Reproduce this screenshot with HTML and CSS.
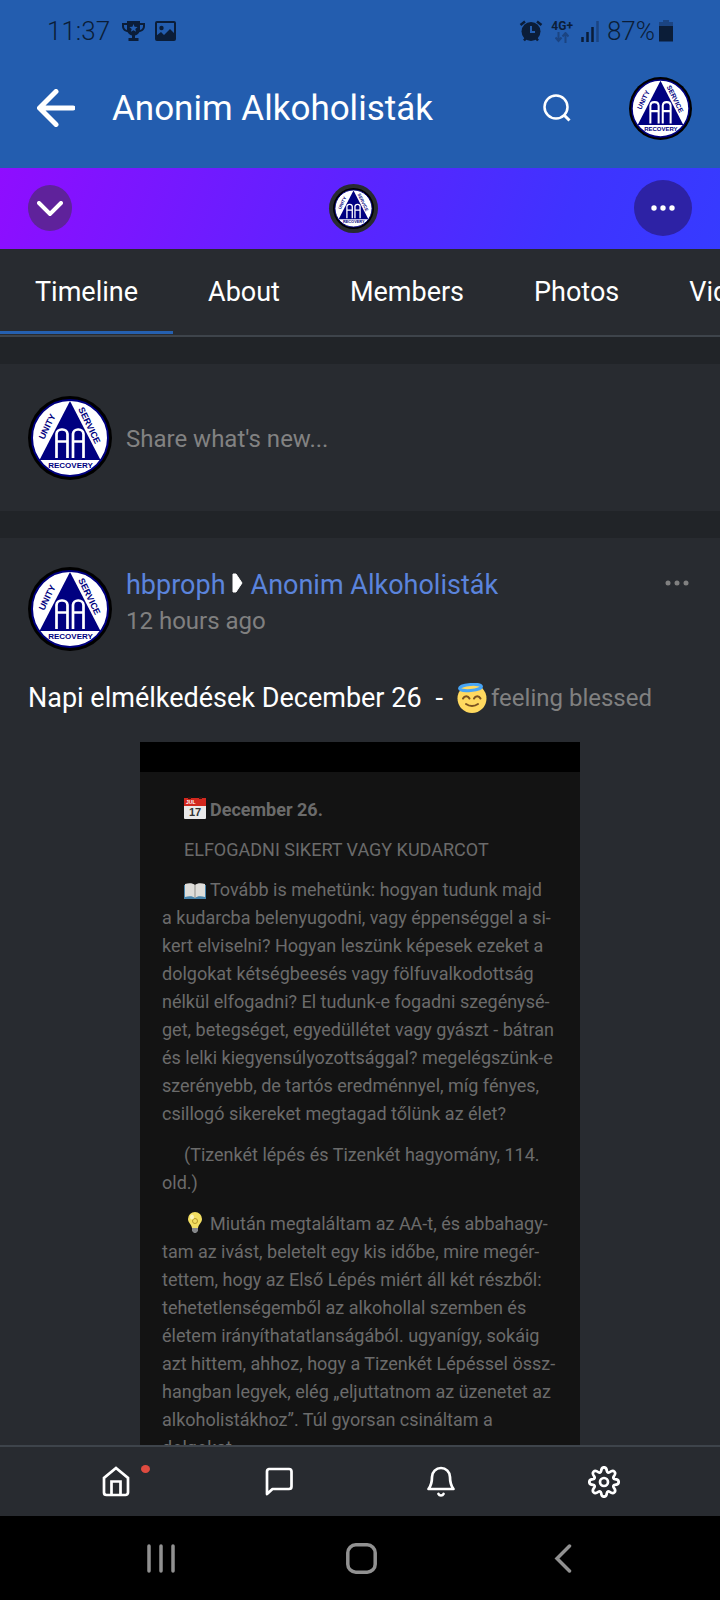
FILE: index.html
```html
<!DOCTYPE html>
<html lang="hu">
<head>
<meta charset="utf-8">
<meta name="viewport" content="width=device-width, initial-scale=1">
<title>Anonim Alkoholisták</title>
<link rel="stylesheet" href="styles.css">
</head>
<body>
<svg class="defs" aria-hidden="true">
  <symbol id="aa-logo" viewBox="0 0 84 84">
    <circle cx="42" cy="42" r="42" fill="#000"/>
    <circle cx="42" cy="42" r="38" fill="#fff" stroke="#000080" stroke-width="2"/>
    <path d="M42 5 72.500 64h-61z" fill="#000080"/>
    <path d="M28.500 62V38a5 5 0 0 1 5-4.500h1a5 5 0 0 1 5 4.500v24M28.500 45.500h11M45 62V38a5 5 0 0 1 5-4.500h.5a5 5 0 0 1 5 4.500v24M45 45.500h10.500" fill="none" stroke="#fff" stroke-width="2.700"/>
    <g class="logo-words">
      <text transform="translate(16 44) rotate(-64)">UNITY</text>
      <text transform="translate(50 13) rotate(64)">SERVICE</text>
      <text x="42.500" y="71.500" text-anchor="middle">RECOVERY</text>
    </g>
  </symbol>
</svg>

<header class="top">
  <div class="status">
    <span>11:37</span>
    <svg class="trophy" width="23" height="20" viewBox="0 0 23 20"><path fill="currentColor" fill-rule="evenodd" d="M5 0h13v2h5v3c0 3-2 5.500-5.500 6-1 2-2.500 3-4.500 3.500V17h3.500v3h-10v-3H10v-2.500C8 14 6.500 13 5.500 11 2 10.500 0 8 0 5V2h5zM2 4v1c0 2 1 3.400 3 4V4zm19 0h-3v5c2-.6 3-2 3-4zm-9.500-1L10.400 5.800l-3 .2 2.300 1.900-.8 2.900 2.600-1.600 2.500 1.600-.7-2.900L15.600 6l-3-.2z"/></svg>
    <svg class="picture" width="21" height="20" viewBox="0 0 21 20"><rect x="1" y="1" width="19" height="18" rx="1" fill="none" stroke="currentColor" stroke-width="2"/><circle cx="6.500" cy="7" r="2.200" fill="currentColor"/><path d="M1 15l5-4 3 3 6-6 5 5v6H1z" fill="currentColor"/></svg>
    <div class="status-right">
      <svg width="24" height="22" viewBox="0 0 24 22"><path d="M1.500 5 6 1.500M18 1.500 22.500 5M5 20.500l2.500-3M19 20.500l-2.500-3" stroke="currentColor" stroke-width="2.500"/><circle cx="12" cy="11.500" r="9.500" fill="currentColor"/><path d="M12 6v6h4" fill="none" stroke="#235daf" stroke-width="2"/></svg>
      <div class="network"><span>4G+</span><svg width="14" height="11" viewBox="0 0 14 11"><path d="M3.500 0v8M.5 5.500l3 3.500 3-3.500M10.500 11V2M7.500 4.500l3-3.500 3 3.500" fill="none" stroke="#1b4482" stroke-width="2"/></svg></div>
      <svg width="18" height="21" viewBox="0 0 18 21"><path d="M1.500 16v5M6.500 11v10M11.500 6v15" stroke="currentColor" stroke-width="2.500"/><path d="M16.500 0v21" stroke="#1b4482" stroke-width="2.500"/></svg>
      <span class="charge">87%</span>
      <svg width="14" height="22" viewBox="0 0 14 22"><path d="M0 2h4V0h6v2h4v4H0z" fill="#1b4482"/><path d="M0 6h14v15.500H0z" fill="currentColor"/></svg>
    </div>
  </div>
  <div class="appbar">
    <button class="plain" aria-label="Back"><svg width="38" height="38" viewBox="0 0 38 38"><path d="M19 2.500 2.500 19 19 35.500M3 19h33" fill="none" stroke="#fff" stroke-width="5" stroke-linecap="round" stroke-linejoin="round"/></svg></button>
    <h1>Anonim Alkoholisták</h1>
    <button class="plain search" aria-label="Search"><svg width="28" height="28" viewBox="0 0 28 28"><circle cx="13" cy="13" r="11.500" fill="none" stroke="#fff" stroke-width="2.500"/><path d="m21 21 5.500 5.500" stroke="#fff" stroke-width="3"/></svg></button>
    <button class="plain" aria-label="Profile"><svg width="63" height="63"><use href="#aa-logo"/></svg></button>
  </div>
</header>

<div class="cover">
  <button class="round fold" aria-label="Collapse"><svg width="26" height="15" viewBox="0 0 26 15"><path d="m2 2 11 11L24 2" fill="none" stroke="#fff" stroke-width="4" stroke-linecap="round"/></svg></button>
  <div class="group-logo"><svg width="41" height="41"><use href="#aa-logo"/></svg></div>
  <button class="round more" aria-label="More"><svg width="24" height="6" viewBox="0 0 24 6" fill="#fff"><circle cx="3" cy="3" r="2.700"/><circle cx="12" cy="3" r="2.700"/><circle cx="21" cy="3" r="2.700"/></svg></button>
</div>

<nav class="tabs">
  <a href="#timeline" class="active">Timeline</a>
  <a href="#about">About</a>
  <a href="#members">Members</a>
  <a href="#photos">Photos</a>
  <a href="#videos">Videos</a>
</nav>

<main class="feed">
  <section class="panel composer">
    <svg class="avatar"><use href="#aa-logo"/></svg>
    <input type="text" aria-label="Share what's new" placeholder="Share what's new...">
  </section>

  <article class="panel post">
    <div class="post-head">
      <svg class="avatar"><use href="#aa-logo"/></svg>
      <div class="byline">
        <div class="names"><a href="#user">hbproph</a><svg width="11" height="20" viewBox="0 0 11 20"><path d="M1 1h3l6 9-6 9H1z" fill="#fff" stroke="#fff" stroke-linejoin="round"/></svg><a href="#group">Anonim Alkoholisták</a></div>
        <div class="time">12 hours ago</div>
      </div>
      <button class="plain post-more" aria-label="Post options"><svg width="24" height="6" viewBox="0 0 24 6" fill="#808080"><circle cx="3" cy="3" r="2.500"/><circle cx="12" cy="3" r="2.500"/><circle cx="21" cy="3" r="2.500"/></svg></button>
    </div>
    <p class="message">
      <span>Napi elmélkedések December 26</span>
      <span class="dash">-</span>
      <svg width="30" height="30" viewBox="0 0 30 30"><circle cx="15" cy="15.500" r="14.500" fill="#ffd95f"/><ellipse cx="13.500" cy="4.500" rx="11" ry="3" transform="rotate(-5 13.500 4.500)" fill="#ffd95f" stroke="#48a5f5" stroke-width="3"/><path d="M6 15.500c1.500-3 5-3 6.500 0M17 15.500c1.500-3 5-3 6.500 0M9 21c3.500 2.500 8.500 2.500 12 0" fill="none" stroke="#7b5321" stroke-width="2" stroke-linecap="round"/></svg>
      <span class="feeling">feeling blessed</span>
    </p>
    <div class="sheet">
      <div class="reading">
        <p class="heading"><svg class="glyph" width="22" height="22" viewBox="0 0 22 22"><rect y="1" width="22" height="21" rx="1" fill="#e9e9e9"/><path d="M0 1h22v8H0z" fill="#d2281e"/><path d="M4 0h3v2H4zM15 0h3v2h-3z" fill="#3a1512"/><text class="cal-month" x="2" y="7">JUL</text><text class="cal-day" x="11" y="19" text-anchor="middle">17</text></svg><strong>December 26.</strong></p>
        <p class="heading">ELFOGADNI SIKERT VAGY KUDARCOT</p>
        <p><svg class="glyph" width="22" height="16" viewBox="0 0 22 16"><path d="M0 2h22v14H0z" fill="#4582aa"/><path d="M1 1c4-1.500 8-1 10 1 2-2 6-2.500 10-1v13c-4-1-8-1-10 1-2-2-6-2-10-1z" fill="#deddd9"/><path d="M11 2v13" stroke="#8d8d89"/></svg>Tovább is mehetünk: hogyan tudunk majd<br>a kudarcba belenyugodni, vagy éppenséggel a si-<br>kert elviselni? Hogyan leszünk képesek ezeket a<br>dolgokat kétségbeesés vagy fölfuvalkodottság<br>nélkül elfogadni? El tudunk-e fogadni szegénysé-<br>get, betegséget, egyedüllétet vagy gyászt - bátran<br>és lelki kiegyensúlyozottsággal? megelégszünk-e<br>szerényebb, de tartós eredménnyel, míg fényes,<br>csillogó sikereket megtagad tőlünk az élet?</p>
        <p>(Tizenkét lépés és Tizenkét hagyomány, 114.<br>old.)</p>
        <p><svg class="glyph" width="22" height="21" viewBox="0 0 22 21"><path d="M8 14h6v5l-2 2h-2l-2-2z" fill="#85878a"/><path d="M11 0a7 7 0 0 1 7 7c0 4-3.500 5-4 9H8c-.5-4-4-5-4-9a7 7 0 0 1 7-7z" fill="#f3df62"/><circle cx="11" cy="9" r="2.500" fill="none" stroke="#b79a2c"/><ellipse cx="8" cy="5" rx="2" ry="2.500" fill="#fcf5ba"/></svg>Miután megtaláltam az AA-t, és abbahagy-<br>tam az ivást, beletelt egy kis időbe, mire megér-<br>tettem, hogy az Első Lépés miért áll két részből:<br>tehetetlenségemből az alkohollal szemben és<br>életem irányíthatatlanságából. ugyanígy, sokáig<br>azt hittem, ahhoz, hogy a Tizenkét Lépéssel össz-<br>hangban legyek, elég „eljuttatnom az üzenetet az<br>alkoholistákhoz”. Túl gyorsan csináltam a<br>dolgokat.</p>
      </div>
    </div>
  </article>
</main>

<nav class="dock">
  <a href="#home" aria-label="Home"><svg width="28" height="31" viewBox="0 0 28 31"><path d="M14 2 26 12v14.500a2.500 2.500 0 0 1-2.500 2.500h-19A2.500 2.500 0 0 1 2 26.500V12zM9.500 29V15.500h9V29" fill="none" stroke="#fff" stroke-width="2.700"/></svg><i class="dot"></i></a>
  <a href="#messages" aria-label="Messages"><svg width="28" height="31" viewBox="0 0 28 31"><path d="M4 3h20a2.500 2.500 0 0 1 2.500 2.500v15A2.500 2.500 0 0 1 24 23H7.500L2 28V5.500A2.500 2.500 0 0 1 4 3z" fill="none" stroke="#fff" stroke-width="2.700" stroke-linejoin="round"/></svg></a>
  <a href="#alerts" aria-label="Notifications"><svg width="28" height="31" viewBox="0 0 28 31"><path d="M1.500 23h25c-2-2.500-3.500-5.500-3.500-12a9 9 0 0 0-18 0c0 6.500-1.500 9.500-3.500 12zM11.500 28c1 2 4 2 5 0" fill="none" stroke="#fff" stroke-width="2.700" stroke-linecap="round" stroke-linejoin="round"/></svg></a>
  <a href="#settings" aria-label="Settings"><svg width="32" height="32" viewBox="0 0 32 32" fill="none" stroke="#fff" stroke-width="2.700"><circle cx="16" cy="16" r="4"/><path stroke-linejoin="round" d="M13.100 5.100C13.300 2.700 14.300 1.300 16 1.300s2.700 1.400 2.900 3.800c.2 1.500 1.500 2 2.700 1.100 1.900-1.500 3.600-1.800 4.800-.6s.9 2.900-.6 4.800c-.9 1.200-.4 2.500 1.100 2.700 2.400.2 3.800 1.200 3.800 2.900s-1.400 2.700-3.800 2.900c-1.500.2-2 1.500-1.100 2.700 1.500 1.900 1.800 3.600.6 4.800s-2.900.9-4.800-.6c-1.200-.9-2.500-.4-2.700 1.100-.2 2.400-1.200 3.800-2.900 3.800s-2.700-1.400-2.900-3.800c-.2-1.500-1.500-2-2.700-1.100-1.900 1.500-3.600 1.800-4.800.6s-.9-2.900.6-4.800c.9-1.200.4-2.500-1.100-2.700-2.400-.2-3.800-1.200-3.800-2.900s1.400-2.700 3.800-2.900c1.500-.2 2-1.500 1.100-2.700-1.500-1.900-1.800-3.600-.6-4.800s2.900-.9 4.800.6c1.200.9 2.500.4 2.700-1.100z"/></svg></a>
</nav>

<footer class="system">
  <button class="plain" aria-label="Recent apps"><svg width="28" height="29" viewBox="0 0 28 29"><path d="M2 2v25M14 2v25M26 2v25" stroke="#919191" stroke-width="3.500" stroke-linecap="round"/></svg></button>
  <button class="plain" aria-label="Home screen"><svg width="31" height="31" viewBox="0 0 31 31"><rect x="1.800" y="1.800" width="27.400" height="27.400" rx="8" fill="none" stroke="#919191" stroke-width="3.500"/></svg></button>
  <button class="plain" aria-label="System back"><svg width="18" height="29" viewBox="0 0 18 29"><path d="M15.500 2 3 14.500 15.500 27" fill="none" stroke="#919191" stroke-width="3.500" stroke-linecap="round"/></svg></button>
</footer>
</body>
</html>
```
FILE: styles.css
```css
* { box-sizing: border-box; }

body {
  margin: 0;
  height: 100vh;
  display: flex;
  flex-direction: column;
  background: #212428;
  color: #fff;
  font-family: Roboto, "Noto Sans", sans-serif;
  font-size: 27px;
  overflow: hidden;
}

svg { display: block; flex: none; }
a { color: inherit; text-decoration: none; }
p, h1 { margin: 0; font-weight: 400; }

.defs { display: none; }
.logo-words { font: bold 9px "Liberation Sans", Arial, sans-serif; fill: #000080; }
.logo-words text:last-child { font-size: 8px; }

.plain { padding: 0; border: 0; background: none; display: flex; justify-content: center; align-items: center; }

/* Top bars */
.top { background: #235daf; }
.status {
  display: flex;
  align-items: center;
  padding: 12px 47px 0;
  line-height: 38px;
  font-size: 26px;
  font-weight: 300;
  color: #0b1d38;
}
.trophy { margin-left: 12px; }
.picture { margin-left: 10px; }
.status-right { display: flex; align-items: center; margin-left: auto; gap: 8px; }
.charge { margin-right: -4px; }
.network { display: flex; flex-direction: column; align-items: center; font-size: 12px; line-height: 12px; font-weight: 700; }
.appbar { display: flex; align-items: center; height: 118px; padding: 0 28px 2px 37px; }
.appbar h1 { margin-left: 37px; font-size: 35px; flex: 1; }
.search { margin-right: 58px; }

.cover {
  display: grid;
  grid-template-columns: 1fr auto 1fr;
  align-items: center;
  height: 81px;
  padding: 0 28px 1px;
  background: linear-gradient(110deg, #8f0dff 0%, #5a24ff 50%, #3f33ff 78%, #363bff 100%);
}
.round { border: 0; padding: 0; border-radius: 50%; display: flex; align-items: center; justify-content: center; }
.fold { width: 44px; height: 46px; background: #5f229b; }
.more { width: 58px; height: 56px; background: #2d22a5; justify-self: end; }
.group-logo { margin-right: 14px; padding: 4px; border-radius: 50%; background: #282b30; }

.tabs {
  display: flex;
  flex: none;
  overflow: hidden;
  background: #282b30;
  border-bottom: 2px solid #3e444b;
}
.tabs a { padding: 4px 35px 0; line-height: 80px; white-space: nowrap; }
.tabs .active { padding-bottom: 0; border-bottom: 3px solid #2560b0; margin-bottom: 1px; line-height: 78px; }
.tabs a:not(.active) { line-height: 78px; }

/* Feed */
.feed { flex: 1; min-height: 0; overflow: hidden; }
.panel { margin-top: 27px; background: #282b30; }
.avatar { width: 84px; height: 84px; }
.composer { display: flex; align-items: center; gap: 14px; padding: 32px 28px 31px; }
.composer input { flex: 1; min-width: 0; padding: 2px 0 0; border: 0; outline: 0; background: none; color: #fff; font: inherit; font-size: 24px; }
.composer input::placeholder { color: #828282; opacity: 1; }

.post { padding: 29px 28px 0; }
.post-head { display: flex; gap: 14px; }
.byline { flex: 1; line-height: 36px; }
.names { display: flex; color: #5b84dc; }
.names svg { margin: 6px 8px 0 6px; }
.time, .feeling { font-size: 24px; color: #808080; }
.post-more { align-self: flex-start; margin: 13px 3px 0 0; }
.message { display: flex; align-items: center; margin: 29px 0 26px; line-height: 36px; }
.message .dash { margin: 0 14px; }
.message .feeling { margin-left: 4px; }

.sheet { width: 440px; max-width: 100%; margin: 0 auto; border-top: 30px solid #000; background: #131313; }
.reading { padding: 24px 22px 0; font-size: 18px; line-height: 28px; color: #6b6b6b; white-space: nowrap; }
.reading p { margin-bottom: 13px; text-indent: 22px; }
.reading .heading { margin-bottom: 12px; }
.glyph { display: inline-block; margin-right: 4px; vertical-align: -3px; text-indent: 0; }
.cal-month { font: bold 5px "Liberation Sans", Arial, sans-serif; fill: #fff; }
.cal-day { font: bold 11px "Liberation Sans", Arial, sans-serif; fill: #333; }

/* Bottom bars */
.dock { display: flex; flex: none; height: 71px; padding: 0 35px; background: #282b30; border-top: 2px solid #3e444b; }
.dock a { position: relative; flex: 1; display: flex; align-items: center; justify-content: center; }
.dot { position: absolute; top: 18px; left: calc(50% + 25px); width: 9px; height: 8px; border-radius: 50%; background: #df4b40; }
.system { display: flex; flex: none; height: 84px; padding: 0 56px 0 60px; background: #000; }
.system button { flex: 1; }
```
